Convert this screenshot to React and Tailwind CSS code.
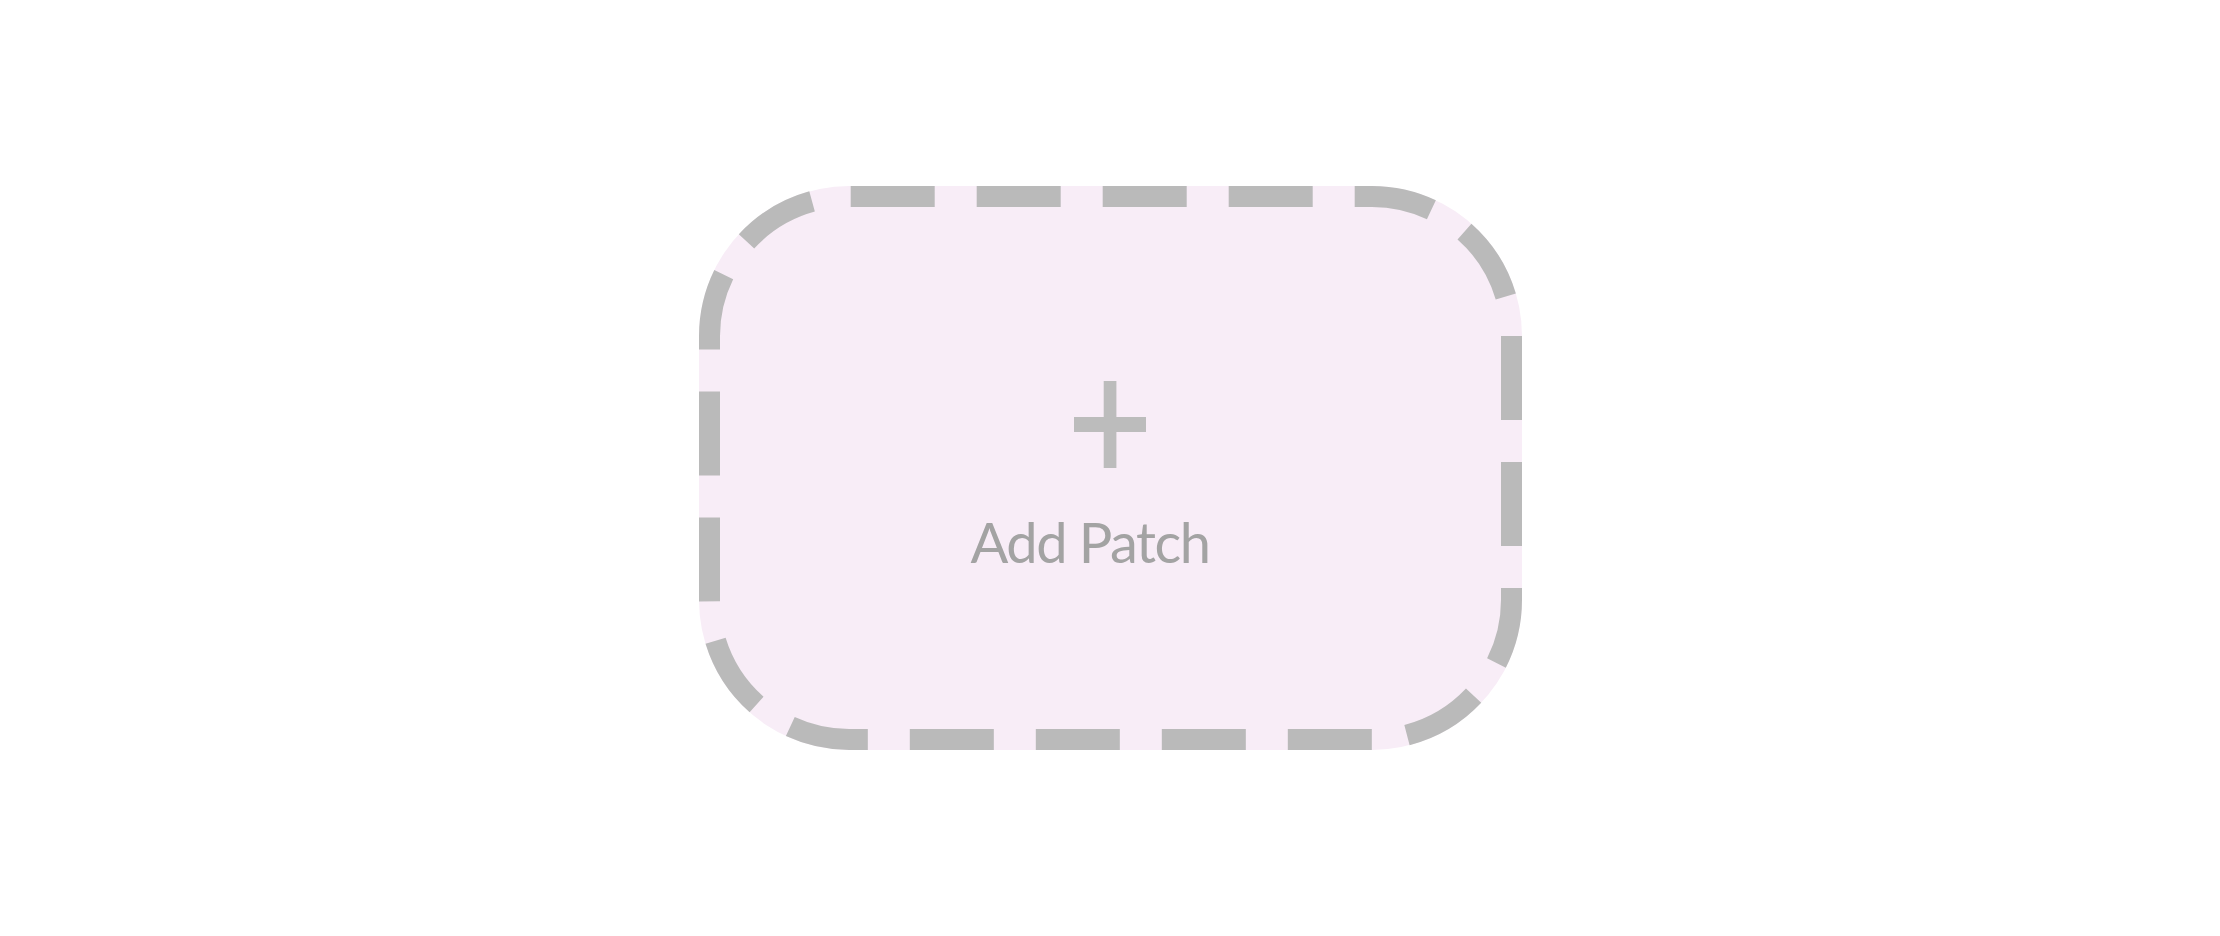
// Dash layout of the card outline, measured along the stroke's centre line.
// The path starts where the top edge leaves the top-left corner and runs clockwise.
const R = 139.5
const arc = (deg) => (deg * Math.PI * R) / 180
const SIDE_X = 523
const SIDE_Y = 264
const CORNER = arc(90)

const buildDashes = () => {
	const runs = []
	let s = 0
	// top edge, five dashes, the last one bending into the corner
	;[1.7, 127.7, 253.7, 379.7].forEach((a) => runs.push([a, a + 84]))
	runs.push([505.7, SIDE_X + arc(25.2)])
	runs.push([SIDE_X + arc(41.5), SIDE_X + arc(73.5)])
	s = SIDE_X + CORNER
	// right edge
	runs.push([s, s + 84], [s + 126, s + 210])
	runs.push([s + 252, s + SIDE_Y + arc(26.8)])
	runs.push([s + SIDE_Y + arc(43.2), s + SIDE_Y + arc(75.4)])
	s = s + SIDE_Y + CORNER
	// bottom edge
	;[0, 126, 252, 378].forEach((a) => runs.push([s + a, s + a + 84]))
	runs.push([s + 504, s + SIDE_X + arc(24.8)])
	runs.push([s + SIDE_X + arc(41.4), s + SIDE_X + arc(72.9)])
	s = s + SIDE_X + CORNER
	// left edge
	runs.push([s - 1.7, s + 82.3], [s + 124.3, s + 208.3])
	runs.push([s + 250.3, s + SIDE_Y + arc(26)])
	runs.push([s + SIDE_Y + arc(42.6), s + SIDE_Y + arc(74.5)])
	const total = s + SIDE_Y + CORNER

	const out = [0, runs[0][0]]
	runs.forEach(([a, b], i) => {
		const next = i < runs.length - 1 ? runs[i + 1][0] : total
		out.push(b - a, next - b)
	})
	return out.map((n) => n.toFixed(2)).join(' ')
}

const DASHES = buildDashes()

const AddPatchCard = () => {
	return (
		<button className="relative w-[823px] h-[564px] rounded-[150px] bg-[#f8edf7] flex flex-col items-center pt-[195px]">
			<svg
				width="823"
				height="564"
				viewBox="0 0 823 564"
				className="absolute inset-0 pointer-events-none"
			>
				<path
					d="M150 10.5 H673 A139.5 139.5 0 0 1 812.5 150 V414 A139.5 139.5 0 0 1 673 553.5 H150 A139.5 139.5 0 0 1 10.5 414 V150 A139.5 139.5 0 0 1 150 10.5 Z"
					fill="none"
					stroke="#bababa"
					strokeWidth="21"
					strokeDasharray={DASHES}
				/>
			</svg>
			<svg width="72" height="87" viewBox="0 0 72 87">
				<rect x="29.7" y="0" width="12.7" height="87" fill="#bcbcbc" />
				<rect x="0" y="36" width="72" height="15" fill="#bcbcbc" />
			</svg>
			<span className="mt-[46px] mr-[40px] text-[56px] leading-none font-normal tracking-[-1.5px] text-[#a3a3a3] font-['Lato',sans-serif]">
				Add Patch
			</span>
		</button>
	)
}

export default function App() {
	return (
		<div className="min-h-screen bg-white flex items-center justify-center">
			<AddPatchCard />
		</div>
	)
}
